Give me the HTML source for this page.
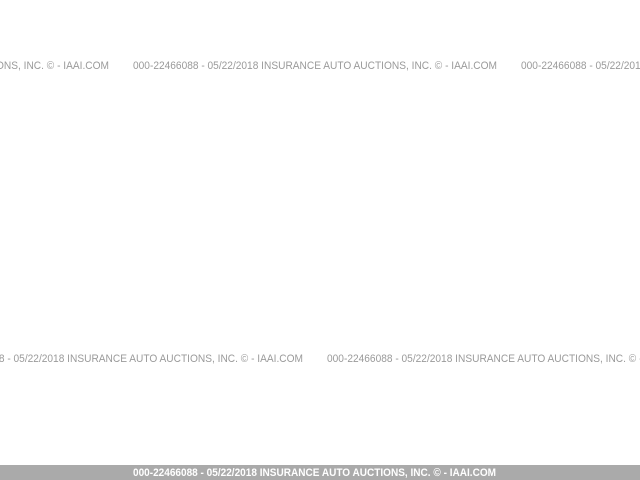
<!DOCTYPE html>
<html><head><style>
html,body{margin:0;padding:0;background:#fff;width:640px;height:480px;overflow:hidden}
</style></head><body>
<svg width="640" height="480" xmlns="http://www.w3.org/2000/svg" style="display:block">
<g font-family="Liberation Sans, Arial, sans-serif" font-size="11" fill="#9a9a9a">
<text x="-255" y="69" textLength="364" lengthAdjust="spacingAndGlyphs">000-22466088 - 05/22/2018 INSURANCE AUTO AUCTIONS, INC. © - IAAI.COM</text>
<text x="133" y="69" textLength="364" lengthAdjust="spacingAndGlyphs">000-22466088 - 05/22/2018 INSURANCE AUTO AUCTIONS, INC. © - IAAI.COM</text>
<text x="521" y="69" textLength="364" lengthAdjust="spacingAndGlyphs">000-22466088 - 05/22/2018 INSURANCE AUTO AUCTIONS, INC. © - IAAI.COM</text>
<text x="-61" y="362" textLength="364" lengthAdjust="spacingAndGlyphs">000-22466088 - 05/22/2018 INSURANCE AUTO AUCTIONS, INC. © - IAAI.COM</text>
<text x="327" y="362" textLength="364" lengthAdjust="spacingAndGlyphs">000-22466088 - 05/22/2018 INSURANCE AUTO AUCTIONS, INC. © - IAAI.COM</text>
</g>
<rect x="0" y="465" width="640" height="15" fill="#aaaaaa"/>
<text x="133" y="476" font-family="Liberation Sans, Arial, sans-serif" font-size="11" font-weight="bold" fill="#fff" textLength="363" lengthAdjust="spacingAndGlyphs">000-22466088 - 05/22/2018 INSURANCE AUTO AUCTIONS, INC. © - IAAI.COM</text>
</svg>
</body></html>
